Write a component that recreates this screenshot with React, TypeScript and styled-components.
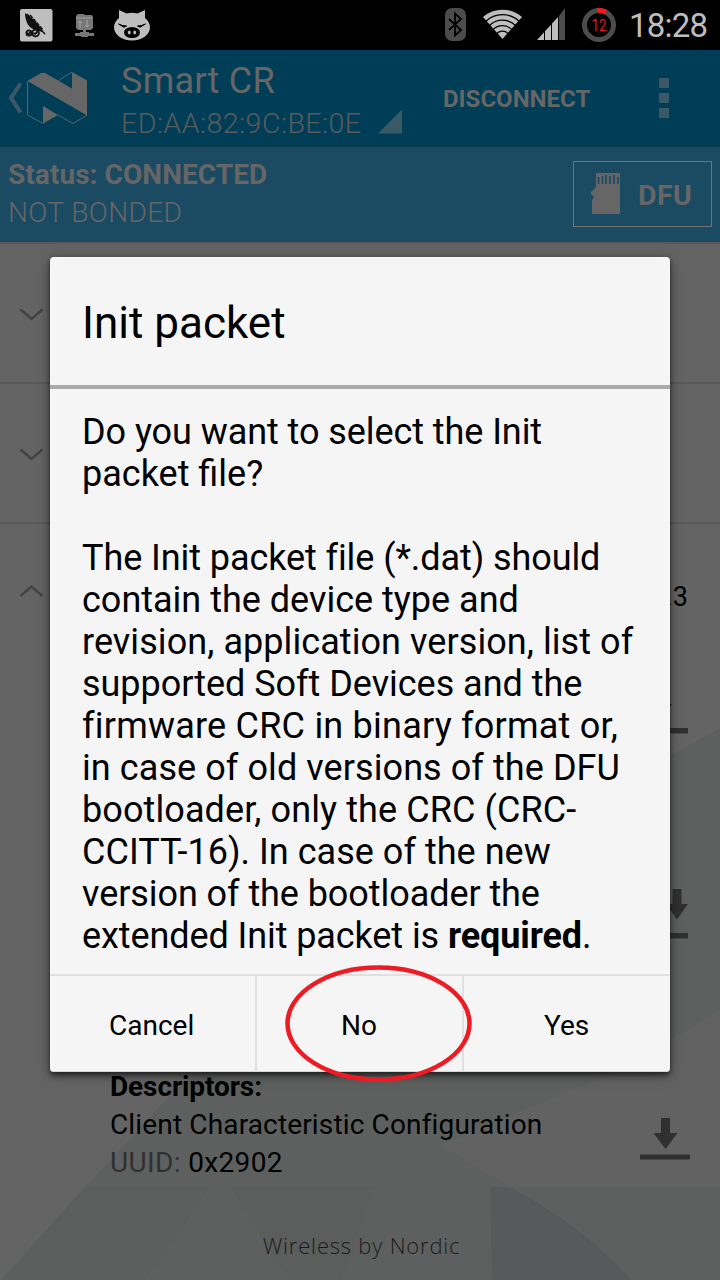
import React from "react";
import styled, { createGlobalStyle } from "styled-components";

const Global = createGlobalStyle`
  * { box-sizing: border-box; }
  body { margin: 0; background: #646464; }
`;

const Screen = styled.main`
  position: relative;
  width: 720px;
  height: 1280px;
  overflow: hidden;
  display: flex;
  flex-direction: column;
  background: #646464;
  font-family: Roboto, "Liberation Sans", sans-serif;
  color: #000;
`;

const Label = styled.span<{ $size: number; $line: number; $weight?: number; $color?: string; $track?: number }>`
  display: block;
  white-space: nowrap;
  font-size: ${(p) => p.$size}px;
  line-height: ${(p) => p.$line}px;
  font-weight: ${(p) => p.$weight ?? 400};
  color: ${(p) => p.$color ?? "inherit"};
  letter-spacing: ${(p) => p.$track ?? 0}px;
`;

const StatusBar = styled.header`
  height: 50px;
  flex: none;
  background: #000;
  display: flex;
  align-items: center;
  justify-content: space-between;
  padding: 0 12px 0 20px;
`;
const Group = styled.div`
  display: flex;
  align-items: center;
  gap: 12px;
`;
const Clock = styled.div`
  width: 79px;
  padding-top: 1px;
`;

const ActionBar = styled.nav`
  height: 97px;
  flex: none;
  background: #003e58;
  color: #666;
  display: flex;
  border-bottom: 1px solid #12394d;
`;
const Logo = styled.div`
  width: 121px;
`;
const Device = styled.div`
  width: 322px;
  padding-top: 10px;
`;
const Address = styled.div`
  display: flex;
  margin-top: 3px;
`;
const AddressText = styled.div`
  width: 257px;
  padding-top: 1px;
`;
const Disconnect = styled.button`
  border: 0;
  padding: 1px 0 0;
  width: 216px;
  text-align: left;
  background: none;
  color: #666;
  font-family: inherit;
`;
const Overflow = styled.div`
  display: grid;
  gap: 5px;
  align-content: center;
`;
const Dot = styled.i`
  width: 10px;
  height: 10px;
  background: #3b5867;
`;

const DeviceStatus = styled.section`
  height: 95px;
  flex: none;
  background: #1b4b63;
  color: #666;
  display: flex;
  justify-content: space-between;
  padding: 9px 8px 0;
`;
const DfuButton = styled.button`
  width: 139px;
  height: 66px;
  margin-top: 5px;
  padding: 0 0 0 17px;
  border: 1px solid #727272;
  background: none;
  color: #666;
  display: flex;
  align-items: center;
  gap: 17px;
  font-family: inherit;
`;
const DfuText = styled.div`
  padding-top: 3px;
`;

const Services = styled.section`
  position: relative;
  flex: 1;
  display: flex;
  flex-direction: column;
  border-top: 2px solid #585858;
`;
const Backdrop = styled.svg`
  position: absolute;
  left: 0;
  bottom: 0;
`;
const ServiceRow = styled.div<{ $h: number; $last?: boolean }>`
  position: relative;
  height: ${(p) => p.$h}px;
  flex: none;
  display: flex;
  justify-content: space-between;
  padding: 61px 32px 0 20px;
  border-bottom: ${(p) => (p.$last ? "0" : "2px solid #595959")};
`;
const ReadActions = styled.div`
  display: flex;
  flex-direction: column;
  align-items: flex-end;
`;
const ReadSlot = styled.div<{ $gap: number }>`
  margin-top: ${(p) => p.$gap}px;
`;
const Descriptor = styled.div`
  position: relative;
  height: 118px;
  flex: none;
  display: flex;
  justify-content: space-between;
  padding: 0 30px 0 110px;
`;
const DescriptorText = styled.div`
  margin-top: -8px;
`;
const DescriptorAction = styled.div`
  padding-top: 42px;
`;
const Muted = styled.span`
  color: #303030;
`;
const Footer = styled.footer`
  position: relative;
  padding: 37px 0 0 3px;
  text-align: center;
  font: 300 22px/28px "Open Sans", sans-serif;
  letter-spacing: 0.8px;
  color: #1b1b1b;
`;

const Overlay = styled.div`
  position: absolute;
  left: 50px;
  top: 257px;
  width: 620px;
  height: 815px;
`;
const Dialog = styled.div`
  height: 100%;
  display: flex;
  flex-direction: column;
  background: #f5f5f5;
  border-radius: 4px;
  box-shadow: 0 3px 5px rgba(0, 0, 0, 0.55), 0 3px 14px rgba(0, 0, 0, 0.35);
`;
const Title = styled.h1`
  margin: 0;
  height: 132px;
  flex: none;
  padding: 36px 32px 0;
  border-bottom: 4px solid #aaa;
`;
const Message = styled.div`
  flex: 1;
  padding: 22px 0 0 32px;
`;
const Actions = styled.div`
  height: 98px;
  flex: none;
  display: grid;
  grid-template-columns: 207px 207px 206px;
  border-top: 2px solid #e0e0e0;
  border-bottom: 1px solid #d6d6d6;
  border-radius: 0 0 4px 4px;
`;
const Action = styled.button<{ $inset: number }>`
  border: 0;
  border-right: 2px solid #e0e0e0;
  background: none;
  color: #000;
  padding: 5px 0 0 ${(p) => p.$inset}px;
  text-align: left;
  font-family: inherit;
  &:last-child { border-right: 0; }
`;
const Ring = styled.svg`
  position: absolute;
  left: 235px;
  top: 708px;
`;

const Chevron = ({ up }: { up?: boolean }) => (
  <svg width="24" height="18" viewBox="0 0 24 18" fill="none" stroke="#424343" strokeWidth="2.4">
    <path d={up ? "M0.500 11L11.500 1.600L22.500 11" : "M0.500 4.500L11.500 14L22.500 4.500"} />
  </svg>
);

const Download = () => (
  <svg width="50" height="42" viewBox="0 0 50 42" fill="#303030" display="block">
    <path d="M21 0h9v15h7.500L25.500 31 13.500 15H21zM0 36.500h50v5H0z" />
  </svg>
);

const Notify = () => (
  <svg width="50" height="50" viewBox="0 0 50 50" fill="#303030" display="block">
    <path d="M34.500 0h9v15h6.500L39 30.500 28 15h6.500zM0 44h50v5.500H0z" />
  </svg>
);

const Upload = () => (
  <svg width="50" height="42" viewBox="0 0 50 42" fill="#303030" display="block">
    <path d="M19 0h9v12h6L23.500 28 13 12h6zM0 36h50v5.500H0z" />
  </svg>
);

const message: [React.ReactNode, number][] = [
  ["Do you want to select the Init", -0.07],
  ["packet file?", 0],
  ["\u00a0", 0],
  ["The Init packet file (*.dat) should", -0.08],
  ["contain the device type and", 0],
  ["revision, application version, list of", 0.07],
  ["supported Soft Devices and the", -0.03],
  ["firmware CRC in binary format or,", 0.22],
  ["in case of old versions of the DFU", 0.08],
  ["bootloader, only the CRC (CRC-", 0.1],
  ["CCITT-16). In case of the new", 0.03],
  ["version of the bootloader the", -0.07],
  [<>extended Init packet is <b>required</b>.</>, -0.09],
];

export default function App() {
  return (
    <>
      <Global />
      <Screen>
        <StatusBar>
          <svg width="132" height="50" viewBox="20 0 132 50">
            <rect x="20" y="9" width="32.5" height="32.5" rx="2" fill="#bebebe" />
            <path d="M25 13c0 7 3 14 8 16l9 3 4 3-7-9-4-5z" fill="#111" />
            <path d="M27 14l18 20M30 15l13 15" stroke="#111" strokeWidth="1.500" strokeDasharray="4 1" />
            <g fill="none" stroke="#111" strokeWidth="1.800"><circle cx="29" cy="33" r="2.600" /><circle cx="35.500" cy="33" r="3.400" /><path d="M27 33l2 1 2-3M33 33l2 1 3-3" /></g>
            <path d="M76 16l2-2h6l1 1h7l1 2v11l-2 2h-5v2h3v1h5v3h-6v1h-7v-1h-6v-3h5v-1h3v-2h-5l-2-2z" fill="#777" />
            <path d="M76 18h16M80 28v-7m-2 2l2-2 2 2M87 20v7m-2-2l2 2 2-2" stroke="#a5a5a5" fill="none" />
            <path d="M119 10l7.500 3.500q5.500-1.500 11 0l7.500-3.500v8q5 4 5 9.500c0 7-8 13-18 13s-18-6-18-13q0-5.500 5-9.500z" fill="#bebebe" />
            <ellipse cx="132" cy="32.500" rx="8" ry="5.500" />
            <path d="M118.500 24q4 2 8 2-3 2.500-5-.3zM145.500 24q-4 2-8 2 3 2.500 5-.3z" stroke="#000" />
            <ellipse cx="129.300" cy="32.500" rx="1.400" ry="2" fill="#bebebe" /><ellipse cx="134.700" cy="32.500" rx="1.400" ry="2" fill="#bebebe" />
          </svg>
          <Group>
            <svg width="172" height="50" viewBox="445 0 172 50">
              <rect x="445" y="8" width="21" height="33" rx="7" fill="#4b4c4b" />
              <path d="M449 19l12 11-6 5.500V13.500l6 5.500-12 11" fill="none" stroke="#000" strokeWidth="1.800" />
              <path d="M483 17a29.500 29.500 0 0 1 39 0l-19.500 22z" fill="#bebebe" />
              <g fill="none" stroke="#000" strokeWidth="1.300"><circle cx="502.500" cy="39" r="24.300" /><circle cx="502.500" cy="39" r="18.800" /><circle cx="502.500" cy="39" r="13.300" /><circle cx="502.500" cy="39" r="7.800" /></g>
              <path d="M537 40l21-23v23z" fill="#bebebe" /><path d="M559 16l6-8v32h-6z" fill="#4b4c4b" />
              <path d="M544.500 28v12M551.500 20v20M558.500 13v27" stroke="#000" />
              <circle cx="599" cy="25" r="14.500" fill="none" stroke="#4b4c4b" strokeWidth="5" />
              <path d="M597.300 10.600a14.500 14.500 0 0 1 8.600 1.700" fill="none" stroke="#ed1c24" strokeWidth="5" />
              <text x="591.500" y="31.300" fontFamily="Roboto, sans-serif" fontSize="17" fontWeight="300" fill="#ed1c24" stroke="#ed1c24" strokeWidth=".3" textLength="15" lengthAdjust="spacingAndGlyphs">12</text>
            </svg>
            <Clock><Label as="time" $size={33} $line={50} $track={-0.8} $color="#bebebe">18:28</Label></Clock>
          </Group>
        </StatusBar>
        <ActionBar>
          <Logo>
            <svg width="100" height="90" viewBox="0 50 100 90" display="block">
              <path d="M20.500 83.500L11 98l9.500 14.500" fill="none" stroke="#3b5867" strokeWidth="4" />
              <path d="M27.500 81L41 73h4l27 15.500V72l15 8.500v35zM43 106l15 9-15 8.500z" fill="#666" />
              <path d="M27.500 81v34L43 123.500M58 81l14-9M58 115l15 8.500 14-8.500" fill="none" stroke="#52666f" />
            </svg>
          </Logo>
          <Device>
            <Label $size={36} $line={42} $track={0.25}>Smart CR</Label>
            <Address>
              <AddressText><Label $size={28.5} $line={36} $weight={300} $track={0.5} $color="#5b5b5b">ED:AA:82:9C:BE:0E</Label></AddressText>
              <svg width="24" height="36"><path d="M0 28.500L24 4.500v24z" fill="#3b5867" /></svg>
            </Address>
          </Device>
          <Disconnect><Label $size={24} $line={97} $weight={700}>DISCONNECT</Label></Disconnect>
          <Overflow><Dot /><Dot /><Dot /></Overflow>
        </ActionBar>
        <DeviceStatus>
          <div>
            <Label $size={28} $line={38} $weight={700} $track={0.06}>Status: CONNECTED</Label>
            <Label $size={28} $line={38} $weight={300} $track={0.42}>NOT BONDED</Label>
          </div>
          <DfuButton>
            <svg width="30" height="42" viewBox="0 0 30 42"><path d="M5 1q0-1 1-1h22q1 0 1 1v39q0 1-1 1H2q-1 0-1-1V27l2-3-3-3v-2l5-5z" fill="#666" /><path d="M7.500 4v7M11.500 3v8M15 2v9M19 3v8M23 2v9M27 4v7" stroke="#1b4b63" strokeWidth="1.700" /></svg>
            <DfuText><Label $size={28.5} $line={38} $weight={700} $track={0.4}>DFU</Label></DfuText>
          </DfuButton>
        </DeviceStatus>
        <Services>
          <Backdrop width="720" height="760" viewBox="0 520 720 760">
            <path d="M720 728L500 850 180 1085 85 1187 0 1280H720z" fill="#5e605f" />
            <path d="M720 1010L620 1070 440 1145 510 1187 635 1280H720z" fill="#626262" />
            <path d="M85 1187H210L145 1280H5zM230 1187H375L340 1280H290z" fill="#5c5d5d" />
            <path d="M490 1187h20q75 40 121 93H492z" fill="#58595b" />
            <path d="M510 1187H720V1280H631Q585 1227 510 1187z" fill="#5e605f" />
          </Backdrop>
          <ServiceRow $h={140}><Chevron /></ServiceRow>
          <ServiceRow $h={140}><Chevron /></ServiceRow>
          <ServiceRow $h={552} $last>
            <Chevron up />
            <ReadActions>
              <Label $size={27} $line={24}>0x180A.3</Label>
              <ReadSlot $gap={83}><Upload /></ReadSlot>
              <ReadSlot $gap={155}><Notify /></ReadSlot>
            </ReadActions>
          </ServiceRow>
          <Descriptor>
            <DescriptorText>
              <Label $size={28} $line={38} $weight={700} $track={-0.1}>Descriptors:</Label>
              <Label $size={28} $line={38} $track={0.15}>Client Characteristic Configuration</Label>
              <Label $size={28} $line={38} $track={0.35}><Muted>UUID:</Muted> 0x2902</Label>
            </DescriptorText>
            <DescriptorAction><Download /></DescriptorAction>
          </Descriptor>
          <Footer>Wireless by Nordic</Footer>
        </Services>
        <Overlay>
          <Dialog>
            <Title><Label $size={44} $line={60}>Init packet</Label></Title>
            <Message>
              {message.map(([text, track], i) => <Label key={i} $size={36} $line={42} $track={track}>{text}</Label>)}
            </Message>
            <Actions>
              <Action $inset={59}><Label $size={28} $line={90}>Cancel</Label></Action>
              <Action $inset={84}><Label $size={28} $line={90}>No</Label></Action>
              <Action $inset={80}><Label $size={28} $line={90}>Yes</Label></Action>
            </Actions>
          </Dialog>
          <Ring width="188" height="118" viewBox="0 0 188 118"><ellipse cx="93.500" cy="58.500" rx="91" ry="56" fill="none" stroke="#ed1c24" strokeWidth="4.500" /></Ring>
        </Overlay>
      </Screen>
    </>
  );
}
